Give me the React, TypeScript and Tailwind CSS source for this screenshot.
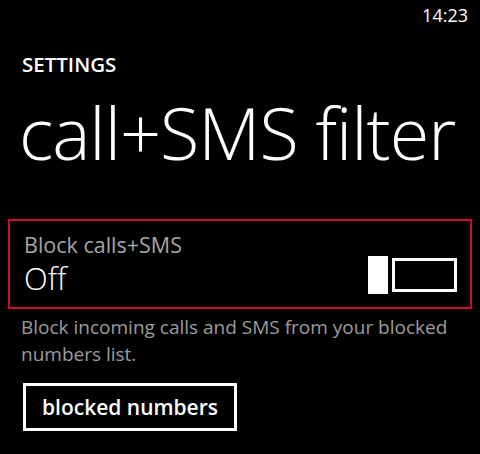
export default function App() {
  return (
    <div className="w-[480px] h-[454px] bg-black text-white overflow-hidden" style={{ fontFamily: '"Open Sans", "Noto Sans", sans-serif' }}>
      <div className="flex justify-end pr-[12px] pt-[3px] h-[26px]">
        <span className="text-[18px] leading-[24px] font-normal">14:23</span>
      </div>
      <div className="pl-[22px] pt-[24px] text-[20.5px] leading-[28px] font-semibold">SETTINGS</div>
      <div className="pl-[19px] mt-[12px] text-[72px] leading-[84px] font-light tracking-[-1px] whitespace-nowrap">call+SMS filter</div>
      <div className="mx-[8px] mt-[45px] h-[90px] border-2 border-[#c8102e] flex items-center justify-between pl-[14px] pr-[13px]">
        <div className="flex flex-col">
          <span className="text-[21.5px] leading-[28px] text-[#a6a6a6]">Block calls+SMS</span>
          <span className="text-[31px] leading-[38px] font-light">Off</span>
        </div>
        <div className="flex items-center mt-[22px]">
          <div className="w-[20px] h-[38px] bg-white" />
          <div className="ml-[4px] w-[65px] h-[34px] border-[3px] border-white" />
        </div>
      </div>
      <div className="pl-[21px] pr-[10px] mt-[5px] text-[19px] leading-[27px] text-[#9c9c9c]">
        Block incoming calls and SMS from your blocked numbers list.
      </div>
      <div className="pl-[23px] mt-[15px]">
        <button className="h-[48px] px-[16px] border-[3px] border-white text-[21px] font-semibold leading-none">blocked numbers</button>
      </div>
    </div>
  );
}
